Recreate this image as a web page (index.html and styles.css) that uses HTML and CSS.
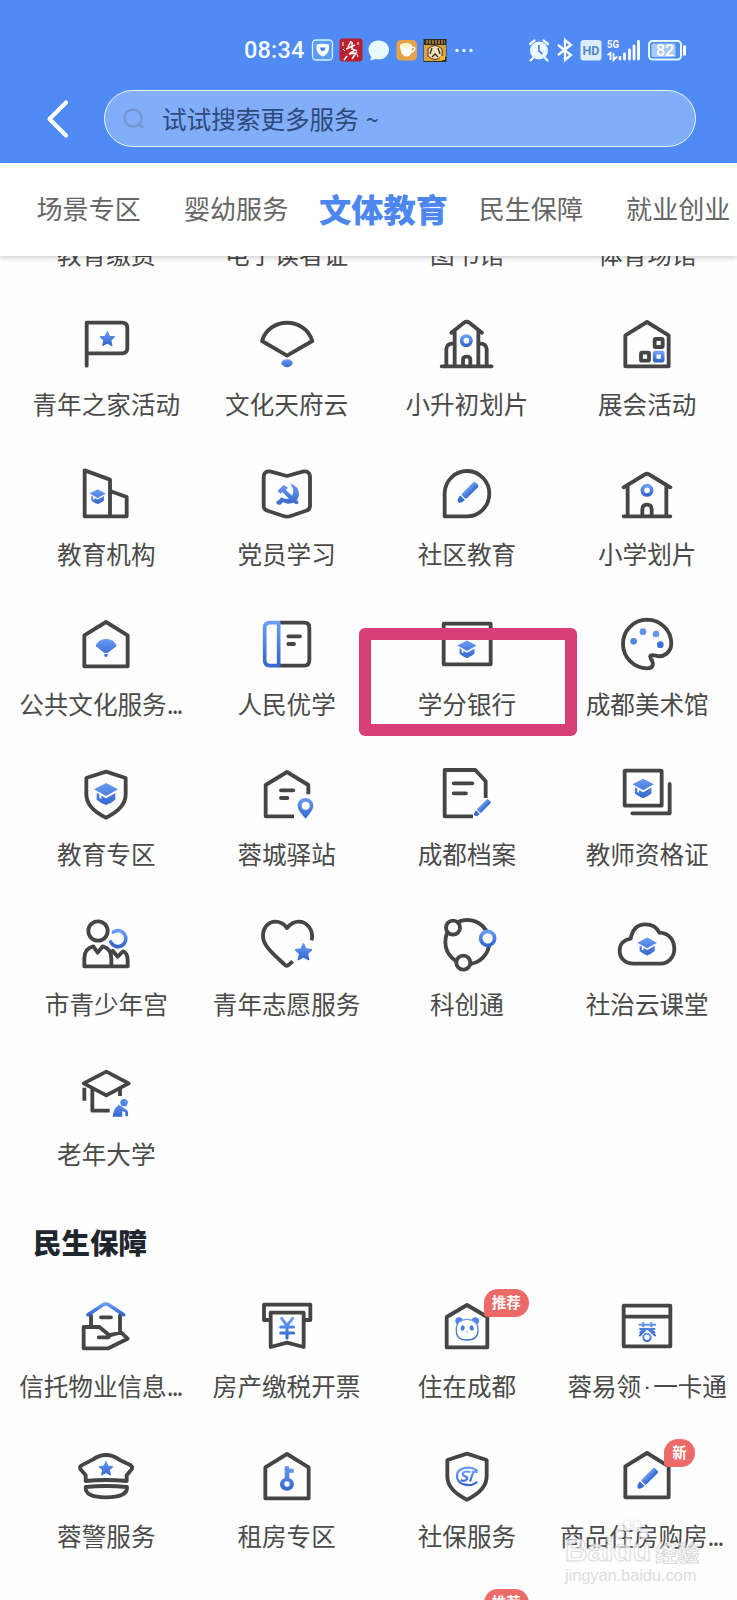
FILE: index.html
```html
<!DOCTYPE html>
<html lang="zh-CN">
<head>
<meta charset="utf-8">
<title>文体教育</title>
<link rel="stylesheet" href="styles.css">
</head>
<body>
<svg class="defs" width="0" height="0" aria-hidden="true">
  <defs>
    <linearGradient id="g" x1="0" y1="0" x2="0" y2="1"><stop offset="0" stop-color="#6a9bf5"/><stop offset="1" stop-color="#3567cd"/></linearGradient>
    <symbol id="cap" viewBox="-40 -40 80 80"><path fill="url(#g)" d="M0-33 36-14 0 6-36-14ZM-28-4-20 0V12L-14 15V5L0 13 28-3V17Q15 28 0 33-15 28-28 17Z"/></symbol>
    <symbol id="star" viewBox="-25 -25 50 50"><path fill="url(#g)" stroke="url(#g)" stroke-width="4" stroke-linejoin="round" d="M0-22 6.500-7.500 22-6 10.500 5 14 21 0 13.500-14 21-10.500 5-22-6-6.500-7.500Z"/></symbol>
    <symbol id="pencil" viewBox="-32 -32 64 64"><g transform="rotate(-45)"><rect x="-19" y="-10" width="56" height="20" rx="4" fill="url(#g)"/><path fill="#3a6dd2" d="M-23-10V10Q-42 9-41 0T-23-10Z"/></g></symbol>
    <symbol id="house" viewBox="0 0 180 180"><path class="k" d="M25 61 90 21 155 61V154H25Z"/></symbol>
    <symbol id="shield" viewBox="0 0 180 180"><path class="k" d="M90 20 149 39V88Q149 130 90 158 31 130 31 88V39Z"/></symbol>
  </defs>
</svg>

<header class="header">
  <div class="status">
    <span class="clock">08:34</span>
    <svg class="st-left" width="162" height="26" viewBox="0 0 162 26">
      <rect x="1.500" y="3" width="20" height="20" rx="3.500" fill="#5b9bf2" stroke="#d5f2fb" stroke-width="1.300"/>
      <path d="M5.500 7.500Q11.500 6 18 7.500V12Q17 17.500 11.700 19.500 6.500 17.500 5.500 12Z" fill="#fff"/><path d="M9 10.500H14.500Q14 14 11.800 14 9.500 14 9 10.500Z" fill="#4384ee"/>
      <rect x="28.500" y="1.500" width="23" height="23" rx="3" fill="#b92131"/>
      <g stroke="#fff" fill="none" stroke-width="1.500"><path d="M40 4 37 10M35 12 44 8M41 5V12L46 14M43 14 38 17 45 16 41 22M33 23 36 19"/><path stroke-width="1" d="M32 5V9M32 12 34 14M47 5V8M46 17 47 20"/></g>
      <path d="M67.500 3.500C61 3.500 57.500 8 57.500 12.500 57.500 16 59 18 60.500 20L59 23.500 64.500 22C72 24 78 19 78 12.500 78 7 73 3.500 67.500 3.500Z" fill="#e9faff"/>
      <rect x="85.500" y="3" width="20.500" height="20.500" rx="4.500" fill="#e6a348"/><path d="M89 9H101V14Q100 19.500 95 19.500 90 19 89 9Z" fill="#fff"/><ellipse cx="95" cy="8.500" rx="6" ry="2.500" fill="#fff2d3"/><path d="M101 10.500Q105 10 103.500 13 102 15 100 15" fill="none" stroke="#fff" stroke-width="1.300"/>
      <rect x="112.500" y="2" width="23" height="23" fill="#302a20"/><path d="M113 8H135V19L131 24H113Z" fill="#d9a43c"/><path d="M115 4H134M115 6H134" stroke="#e3b951" stroke-width="1.200" stroke-dasharray="2 1"/><path d="M117 12Q124 5 131 12V19Q124 26 117 19Z" fill="#f1dfbd" stroke="#4a321e" stroke-width="1"/><path d="M121 11 119 17M127 11 129 17M121 20 124 17 127 20" stroke="#35251a" stroke-width="1.300" fill="none"/><rect x="129" y="19" width="5" height="4" fill="#f1b62d"/>
      <g fill="#e9f7ff"><circle cx="146" cy="13.500" r="1.700"/><circle cx="153" cy="13.500" r="1.700"/><circle cx="160" cy="13.500" r="1.700"/></g>
    </svg>
    <svg class="st-right" width="162" height="26" viewBox="0 0 162 26">
      <circle cx="12" cy="13.500" r="9" fill="#e9f9ff"/><path d="M12 8V14L15.500 17" stroke="#4f8af5" stroke-width="1.800" fill="none"/><path d="M3 7 7.500 3.500M21 7 16.500 3.500M6 21 3.500 23.500M18 21 20.500 23.500" stroke="#e9f9ff" stroke-width="2.300" stroke-linecap="round"/>
      <path d="M31 8 44 18 38 23V3L44 8 31 18" fill="none" stroke="#fff" stroke-width="2.300"/>
      <rect x="53.500" y="3" width="21" height="20.500" rx="3" fill="#dceefd"/><text x="64" y="18" text-anchor="middle" font-size="13.500" font-weight="700" fill="#568aca" textLength="17" lengthAdjust="spacingAndGlyphs">HD</text>
      <text x="80" y="11" font-size="11" font-weight="700" fill="#fff" textLength="12" lengthAdjust="spacingAndGlyphs">5G</text>
      <path d="M80.500 18 83.500 16V23M86.500 16V23L90 19.500" stroke="#fff" stroke-width="1.800" fill="none"/>
      <path d="M93 20.500V22M97.500 17V22M102.500 13V22M107 9V22M111.500 4.500V22" stroke="#fff" stroke-width="2.800" stroke-linecap="round"/>
      <rect x="122" y="4" width="32" height="18.500" rx="3.500" fill="none" stroke="#e1fbff" stroke-width="2"/><rect x="124.500" y="6.500" width="24" height="13.500" rx="1.500" fill="#a8caf8"/><path d="M157.500 8.500V18.500" stroke="#fff" stroke-width="3"/><text x="138" y="18.700" text-anchor="middle" font-size="16" font-weight="500" fill="#fff">82</text>
    </svg>
  </div>
  <div class="searchrow">
    <svg class="back" width="24" height="40" viewBox="0 0 24 40"><path d="M20 3.500 3.500 20 20 36.500" fill="none" stroke="#fff" stroke-width="4.200" stroke-linecap="round" stroke-linejoin="round"/></svg>
    <div class="search">
      <svg width="22" height="22" viewBox="0 0 22 22"><circle cx="10" cy="10" r="8.500" fill="none" stroke="#7598d3" stroke-width="2.500"/><path d="M16 16 20.500 20" stroke="#7598d3" stroke-width="2.500"/></svg>
      <span class="hint">试试搜索更多服务<i class="tilde">~</i></span>
    </div>
  </div>
</header>

<nav class="tabs">
  <span class="tab">场景专区</span><span class="tab">婴幼服务</span><span class="tab active">文体教育</span><span class="tab">民生保障</span><span class="tab">就业创业</span>
</nav>

<main class="content">
  <section class="grid first">
    <div class="cell"><div class="icon"></div><p>教育缴费</p></div>
    <div class="cell"><div class="icon"></div><p>电子读者证</p></div>
    <div class="cell"><div class="icon"></div><p>图书馆</p></div>
    <div class="cell"><div class="icon"></div><p>体育场馆</p></div>

    <div class="cell"><svg class="icon" viewBox="229 45 180 180"><path class="k" d="M261 197V68H366Q383 68 383 84V145Q383 160 367 160H262"/><use href="#star" x="299" y="92" width="48" height="48"/></svg><p>青年之家活动</p></div>
    <div class="cell"><svg class="icon" viewBox="770 45 180 180"><path class="k" d="M785 123C806 50 914 50 936 123L860 167Z"/><path fill="url(#g)" d="M843 190Q844 179 860 178 876 179 877 190 871 202 860 202 849 202 843 190Z"/></svg><p>文化天府云</p></div>
    <div class="cell"><svg class="icon" viewBox="210 45 180 180"><path class="k" d="M224 199H374M263 197V95M334 197V95M253 98 291 68Q299 62 307 68L345 98M238 197V146Q240 130 260 130M359 197V146Q357 130 337 130"/><path class="k" d="M288 197V179Q288 170 299 170 310 170 310 179V197"/><circle class="b" cx="298" cy="122" r="14" stroke-width="12"/></svg><p>小升初划片</p></div>
    <div class="cell"><svg class="icon" viewBox="751 45 180 180"><use href="#house" x="751" y="45" width="180" height="180"/><rect class="k" x="864" y="117" width="24" height="24" rx="3"/><rect class="k" x="823" y="158" width="24" height="24" rx="3"/><rect class="b" x="864" y="158" width="24" height="24" rx="3"/></svg><p>展会活动</p></div>

    <div class="cell"><svg class="icon" viewBox="229 495 180 180"><path class="k" d="M255 649V511L331 539V649ZM331 573 381 591V649H331"/><use href="#cap" x="267" y="563" width="54" height="54"/></svg><p>教育机构</p></div>
    <div class="cell"><svg class="icon" viewBox="770 495 180 180"><path class="k" d="M790 532Q790 511 812 515L860 528 907 515Q929 511 929 532V619Q929 629 915 633L871 648Q860 652 849 648L804 633Q790 629 790 619Z"/><path fill="url(#g)" d="M832 572 850 555 863 563 856 570 890 600 880 610 846 576 840 581ZM867 550Q897 558 896 585 894 599 882 606 864 616 848 606L839 615 829 607 843 592Q857 600 868 595 878 587 879 574 878 560 867 550Z"/><circle cx="834" cy="608" r="6" fill="#3e70d5"/><circle cx="888" cy="607" r="6" fill="#3e70d5"/></svg><p>党员学习</p></div>
    <div class="cell"><svg class="icon" viewBox="210 495 180 180"><path class="k" d="M233 649V578A67 68 0 1 1 300 649Z"/><use href="#pencil" x="271" y="545" width="64" height="64"/></svg><p>社区教育</p></div>
    <div class="cell"><svg class="icon" viewBox="751 495 180 180"><path class="k" d="M771 649H911M783 646V560M899 646V560M771 562 832 525Q841 518 850 525L911 562M827 647V628Q827 614 841 614 855 614 855 628V647"/><circle class="b" cx="841" cy="571" r="14" stroke-width="12"/></svg><p>小学划片</p></div>

    <div class="cell"><svg class="icon" viewBox="229 45 180 180"><use href="#house" x="229" y="45" width="180" height="180"/><path fill="url(#g)" d="M288 138C297 110 342 110 351 138L325 158 323 170H315L313 158Z"/><path d="M312 160H326" stroke="#fff" stroke-width="3"/></svg><p class="clipped">公共文化服务<span class="dots">...</span></p></div>
    <div class="cell"><svg class="icon" viewBox="770 45 180 180"><path class="k" d="M838 68H912Q927 68 927 84V180Q927 197 912 197H838"/><path class="b" d="M835 68H809Q793 68 793 84V180Q793 197 809 197H835Z"/><path class="k" d="M864 109H899M864 132H881"/></svg><p>人民优学</p></div>
    <div class="cell"><svg class="icon" viewBox="210 45 180 180"><path class="k" d="M230 71H371V193H230Z"/><use href="#cap" x="268" y="116" width="64" height="64"/></svg><p>学分银行</p><div class="marker"></div></div>
    <div class="cell"><svg class="icon" viewBox="751 45 180 180"><path class="k" d="M769 132A72 72 0 0 1 841 59C884 60 913 92 914 130 914 158 889 174 868 167 853 163 847 165 853 177 862 189 861 205 842 205A73 73 0 0 1 769 132Z"/><g fill="#5184e4"><circle cx="801" cy="124" r="10"/><circle cx="829" cy="95" r="10" fill="#6594ec"/><circle cx="868" cy="102" r="10" fill="#6594ec"/><circle cx="881" cy="134" r="10" fill="#3e70d5"/></g></svg><p>成都美术馆</p></div>

    <div class="cell"><svg class="icon" viewBox="229 495 180 180"><use href="#shield" x="229" y="495" width="180" height="180"/><use href="#cap" x="279" y="542" width="80" height="80"/></svg><p>教育专区</p></div>
    <div class="cell"><svg class="icon" viewBox="770 495 180 180"><path class="k butt" d="M881 649H796V555L860 516 924 555V583"/><path class="k" d="M842 571H879M842 594H861"/><path fill="url(#g)" fill-rule="evenodd" d="M916 594C901 594 892 604 892 617 892 629 904 642 916 656 927 642 939 629 939 617 939 604 929 594 916 594ZM916 605A12 12 0 1 1 916 629A12 12 0 1 1 916 605Z"/></svg><p>蓉城驿站</p></div>
    <div class="cell"><svg class="icon" viewBox="210 495 180 180"><path class="k butt" d="M318 649H233V510H325L356 544V594"/><path class="k" d="M260 550H316M260 580H297"/><use href="#pencil" x="320" y="597" width="52" height="52"/></svg><p>成都档案</p></div>
    <div class="cell"><svg class="icon" viewBox="751 495 180 180"><rect class="k" x="774" y="512" width="111" height="105" rx="2"/><path class="k" d="M909 552V640H797"/><use href="#cap" x="794" y="530" width="71" height="71"/></svg><p>教师资格证</p></div>

    <div class="cell"><svg class="icon" viewBox="229 45 180 180"><circle class="k" cx="295" cy="93" r="29"/><path class="k" d="M254 199V174Q255 145 281 139L294 158 309 139Q334 145 335 174V199ZM335 199H384V179Q383 159 370 154L354 170 339 152"/><path class="b" stroke-linecap="round" d="M333 126A24 24 0 1 0 341 96"/></svg><p>市青少年宫</p></div>
    <div class="cell"><svg class="icon" viewBox="770 45 180 180"><path class="k butt" d="M934 121C941 88 918 65 895 65 880 65 869 73 860 84 849 69 836 65 825 65 803 65 788 84 788 108 788 138 820 163 853 194Q860 201 867 193L877 184"/><use href="#star" x="882" y="128" width="55" height="55"/></svg><p>青年志愿服务</p></div>
    <div class="cell"><svg class="icon" viewBox="210 45 180 180"><circle class="k" cx="301" cy="126" r="66"/><circle cx="258" cy="83" r="21" class="k white"/><circle cx="289" cy="188" r="21" class="k white"/><circle cx="362" cy="115" r="21" class="b white"/></svg><p>科创通</p></div>
    <div class="cell"><svg class="icon" viewBox="751 45 180 180"><path class="k" d="M801 191C775 191 759 174 759 152 759 131 773 119 792 116 797 89 811 73 836 73 858 73 871 83 878 98 908 99 923 122 923 147 923 171 905 191 883 191Z"/><use href="#cap" x="809" y="107" width="65" height="65"/></svg><p>社治云课堂</p></div>

    <div class="cell"><svg class="icon" viewBox="229 495 180 180"><path class="k" d="M252 550 320 515 387 550 320 586Z"/><path class="k butt" d="M254 563V602M278 566V632H330M361 563V588"/><circle cx="373" cy="608" r="11" fill="#5184e4"/><path fill="url(#g)" d="M339 650Q341 625 358 614L367 620 380 629Q387 632 385 649H377V637L368 633V650ZM366 599 387 604 382 609Z"/></svg><p>老年大学</p></div>
  </section>

  <h2>民生保障</h2>
  <section class="grid">
    <div class="cell"><svg class="icon" viewBox="229 231 180 180"><path class="k" d="M274 315V287M361 287V336M304 292H334M252 321H299L329 346 364 337 384 356 326 385H252ZM297 352H327"/><path class="b" stroke-linecap="round" d="M265 284 309 255Q319 249 328 255L372 284"/></svg><p class="clipped">信托物业信息<span class="dots">...</span></p></div>
    <div class="cell"><svg class="icon" viewBox="770 231 180 180"><path class="k" d="M811 300H791V254H930V300H910M811 278H910V381L860 368 811 381Z"/><path class="b yen" d="M844 295 860 317 877 295M860 317V354M841 321H880M841 339H880"/></svg><p>房产缴税开票</p></div>
    <div class="cell"><svg class="icon" viewBox="210 231 180 180"><path class="k" d="M239 291 300 255 361 291V382H239Z"/><g fill="#5284e4"><circle cx="276" cy="303" r="11"/><circle cx="325" cy="303" r="11"/></g><path fill="#fff" stroke="url(#g)" stroke-width="4" d="M268 331C267 309 281 298 300 298 320 298 334 310 333 331 333 354 317 360 300 360 282 360 267 353 268 331Z"/><ellipse cx="287" cy="324" rx="6" ry="8" fill="#4779db" transform="rotate(15 287 324)"/><ellipse cx="314" cy="324" rx="6" ry="8" fill="#4779db" transform="rotate(-15 314 324)"/><circle cx="300" cy="336" r="2" fill="#4779db"/></svg><p>住在成都</p><b class="badge">推荐</b></div>
    <div class="cell"><svg class="icon" viewBox="751 231 180 180"><path class="k" d="M771 257H911V379H771ZM771 290H911"/><path class="b rong" d="M816 314H868M830 306V322M854 306V322M818 327H866M832 327 819 339M851 327 865 339M841 325 818 348M842 325 867 348"/><circle cx="841" cy="352" r="11" class="b rong white"/></svg><p>蓉易领<span class="dot">·</span>一卡通</p></div>

    <div class="cell"><svg class="icon" viewBox="229 681 180 180"><path class="k" d="M258 783V766L242 747Q239 740 246 736L279 719Q319 691 359 719L393 736Q400 741 396 748L381 766V783Q319 777 258 783ZM258 801Q319 795 382 801 384 832 319 832 255 832 258 801Z"/><use href="#star" x="296" y="722" width="46" height="46"/></svg><p>蓉警服务</p></div>
    <div class="cell"><svg class="icon" viewBox="770 681 180 180"><use href="#house" x="770" y="681" width="180" height="180"/><path fill="url(#g)" fill-rule="evenodd" d="M853 742Q853 738 860 738T867 742V746H880V758H867V774C890 785 882 812 860 812S830 785 853 774ZM860 784A8 8 0 1 0 860 800A8 8 0 1 0 860 784Z"/></svg><p>租房专区</p></div>
    <div class="cell"><svg class="icon" viewBox="210 681 180 180"><use href="#shield" x="210" y="681" width="180" height="180"/><path class="b si" d="M331 754C313 735 270 741 270 767 270 798 313 802 331 785"/><path class="b si" d="M310 756C284 750 282 766 295 769 309 773 296 787 281 780M319 756 309 784M314 756H332"/></svg><p>社保服务</p></div>
    <div class="cell"><svg class="icon" viewBox="751 681 180 180"><use href="#house" x="751" y="678" width="180" height="180"/><use href="#pencil" x="811" y="743" width="64" height="64"/></svg><p class="clipped">商品住房购房<span class="dots">...</span></p><b class="badge new">新</b></div>

    <div class="cell"></div><div class="cell"></div><div class="cell"><b class="badge">推荐</b></div><div class="cell"></div>
  </section>
</main>

<div class="watermark">
  <svg width="36" height="28" viewBox="0 0 36 28"><g fill="#fff" stroke="#d2d2d2"><ellipse cx="6" cy="15" rx="4" ry="5"/><ellipse cx="13" cy="7" rx="4" ry="6"/><ellipse cx="23" cy="7" rx="4" ry="6"/><ellipse cx="30" cy="15" rx="4" ry="5"/></g></svg>
  <div class="wm-brand"><span class="wm-latin">Bai<span class="wm-du">du</span></span><span class="wm-cjk">经验</span></div>
  <div class="wm-url">jingyan.baidu.com</div>
</div>
</body>
</html>
```

FILE: styles.css
```css
* { box-sizing: border-box; }
html, body { margin: 0; height: 1600px; overflow: hidden; }
body {
  width: 737px;
  position: relative;
  background: #fefefe;
  font-family: "Noto Sans CJK SC", sans-serif;
  color: #4a4a4a;
}
.defs { position: absolute; }
.header { height: 163px; background: #4f8af5; padding-top: 37px; }
.status { display: flex; align-items: center; height: 26px; padding-left: 244px; }
.clock { width: 66.500px; font: 500 23.500px/27px Roboto, sans-serif; color: #f4fbff; letter-spacing: .2px; }
.st-left { flex: none; }
.st-right { flex: none; margin-left: 54px; font-family: Roboto, sans-serif; }
.searchrow { display: flex; align-items: center; margin-top: 27px; padding-left: 46px; height: 57px; }
.back { flex: none; }
.search {
  margin-left: 34px;
  width: 592px;
  height: 57px;
  border: 1px solid #e8f8ff;
  border-radius: 29px;
  background: #82adf9;
  display: flex;
  align-items: center;
  padding-left: 18px;
  gap: 17px;
  font-size: 24.600px;
  line-height: 36px;
  color: #2e4a7c;
}
.hint { padding-bottom: 1px; }
.tilde { font-style: normal; font-size: 24px; margin-left: 7px; }

.tabs {
  position: relative;
  z-index: 1;
  display: flex;
  height: 93px;
  padding-left: 15px;
  background: #fff;
  overflow: visible;
  box-shadow: 0 2px 5px rgba(0, 0, 0, .18);
}
.tab { flex: 0 0 147.400px; text-align: center; font-size: 26.100px; line-height: 90px; color: #666; white-space: nowrap; }
.tab.active { font-size: 32.300px; font-weight: 900; color: #4c86ee; }

.content { height: 1344px; overflow: hidden; }
.grid { display: grid; grid-template-columns: repeat(4, 180.300px); grid-auto-rows: 150px; padding-left: 16.150px; }
.first { margin-top: -106px; }
.cell { position: relative; display: flex; flex-direction: column; align-items: center; padding-top: 15px; }
.icon { display: block; flex: none; width: 60px; height: 60px; }
.cell p { margin: 10px 0 0; font-size: 24.600px; line-height: 36px; white-space: nowrap; }
.cell .clipped { align-self: flex-start; padding-left: 3px; }
.dots { letter-spacing: -1.900px; }
.dot { display: inline-flex; justify-content: center; width: 12px; font-family: Roboto, sans-serif; }
.k { fill: none; stroke: #454545; stroke-width: 11.500; stroke-linecap: round; stroke-linejoin: round; }
.k.butt { stroke-linecap: butt; }
.b { fill: none; stroke: url(#g); stroke-width: 11; stroke-linejoin: round; }
.b.yen { stroke-width: 9; stroke-linecap: round; }
.b.rong { stroke-width: 6; }
.b.si { stroke-width: 6.500; }
.k.white, .b.white { fill: #fff; }
h2 { margin: 0; padding: 4px 0 3px 33px; font-size: 28.500px; line-height: 75px; font-weight: 900; color: #1f262d; }

.badge {
  position: absolute;
  left: 107px;
  top: 7px;
  width: 45px;
  height: 28px;
  border-radius: 14px 14px 14px 4px;
  background: #ec6a67;
  color: #fff;
  font-size: 14.500px;
  line-height: 26px;
  text-align: center;
}
.badge.new { width: 31px; }
.marker {
  position: absolute;
  left: -17.500px;
  top: 27.500px;
  width: 218px;
  height: 108px;
  border: solid #d83f76;
  border-width: 12px;
  border-radius: 6px;
}

.watermark { position: absolute; left: 565px; top: 1519px; width: 140px; height: 70px; color: #fff; opacity: .75; }
.watermark svg { position: absolute; left: 49px; top: 0; }
.wm-brand { display: flex; align-items: center; gap: 4px; padding-top: 17px; height: 46px; -webkit-text-stroke: 1px #cfcfcf; }
.wm-latin { font: 700 31px/30px "Liberation Sans", sans-serif; }
.wm-cjk { font-size: 22px; line-height: 30px; font-weight: 700; }
.wm-url { font: 16.500px/20px "Liberation Sans", sans-serif; color: #d2d2d2; letter-spacing: -.1px; }
```
